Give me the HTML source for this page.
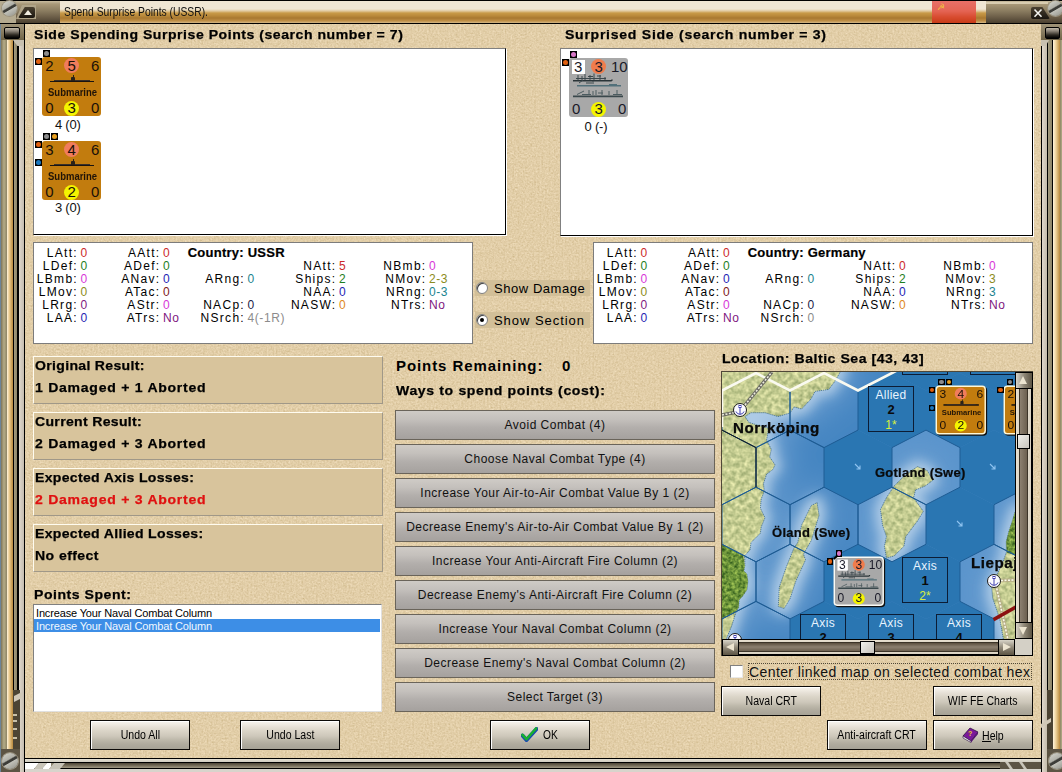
<!DOCTYPE html>
<html><head><meta charset="utf-8">
<style>
*{margin:0;padding:0;box-sizing:border-box}
html,body{width:1062px;height:772px;overflow:hidden;background:#e0cca6;font-family:"Liberation Sans", sans-serif;color:#000}
.a{position:absolute}
.t{position:absolute;white-space:nowrap;line-height:1}
.b13{font-weight:bold;font-size:13px;letter-spacing:0.5px;transform:scaleX(1.08);transform-origin:0 0;-webkit-text-stroke:0.25px #000}
.btn{position:absolute;border:1px solid #6a645a;background:linear-gradient(#cfcbc6 0%,#c4c0bc 30%,#b2aeab 60%,#a5a19e 100%);font-size:12px;letter-spacing:0.48px;text-align:center;color:#111}
.wb{position:absolute;border:1px solid #0c0a08;box-shadow:inset 1px 1px 0 #fff;background:linear-gradient(#f6f4f0 0px,#f0ebe3 3px,#e6e0d6 6px,#dad4c7 10px,#cec8bb 15px,#bdb8aa 19px,#b0ab9e 23px,#a6a296 28px);font-size:12px;text-align:center;color:#000;display:flex;align-items:center;justify-content:center}
.wb span{display:inline-block;transform:scaleX(0.88);white-space:nowrap}
</style></head><body>

<svg class="a" style="left:0;top:0" width="1062" height="772"><filter id="tx" x="0" y="0" width="100%" height="100%"><feTurbulence type="fractalNoise" baseFrequency="0.55" numOctaves="2" seed="3" result="n"/><feColorMatrix in="n" type="matrix" values="0.33 0.33 0.33 0 0  0.33 0.33 0.33 0 0  0.33 0.33 0.33 0 0  0 0 0 0 1" result="g"/><feComposite in="g" in2="SourceGraphic" operator="arithmetic" k1="0" k2="0.5" k3="1" k4="-0.25"/></filter><rect width="1062" height="772" fill="#e2cea8" filter="url(#tx)"/></svg>
<div class="a" style="left:0;top:0;width:1062px;height:24px;background:#000"></div>
<div class="a" style="left:60px;top:1px;width:926px;height:22px;background:linear-gradient(#efe6d4 0px,#efe6d4 8px,#e0c89c 10px,#c89a48 12px,#b8883a 15px,#a87830 17px,#c09048 20px,#d4b888 22px)"></div>
<div class="t" style="left:63.5px;top:6px;font-size:12px;color:#111;transform:scaleX(0.86);transform-origin:0 0">Spend Surprise Points (USSR).</div>
<div class="a" style="left:0;top:1px;width:60px;height:22px;background:linear-gradient(#c8bca0 0,#a89878 3px,#8a7c60 10px,#6c5e48 16px,#4a4030 22px)"></div>
<div class="a" style="left:0;top:1px;width:16px;height:22px;background:#b4aa90"></div>
<div class="a" style="left:2px;top:1px;width:15px;height:15px;border-radius:50%;background:linear-gradient(150deg,#d8d8d0 0%,#b0b0a8 40%,#3c3c38 46%,#3c3c38 54%,#c0c0b8 58%,#909088 100%);box-shadow:0 0 0 1px #9c9480"></div>
<div class="a" style="left:16px;top:5px;width:20px;height:14px;background:#b0a488;clip-path:polygon(30% 0,100% 0,100% 100%,0 100%)"></div>
<div class="a" style="left:18px;top:7px;width:17px;height:11px;background:linear-gradient(#4a4030,#1a1610);clip-path:polygon(40% 0,100% 0,100% 100%,0 100%);border-radius:2px"></div>
<div class="a" style="left:24px;top:10px;width:0;height:0;border-left:4px solid transparent;border-right:4px solid transparent;border-bottom:5px solid #f0ece0"></div>
<div class="a" style="left:932px;top:1px;width:44px;height:22px;background:linear-gradient(#e87068 0,#e46454 10px,#d84c30 16px,#c83c18 22px)"></div>
<div class="t" style="left:937px;top:3px;font-size:9px;color:#f0c040">&#9773;</div>
<div class="a" style="left:986px;top:1px;width:76px;height:22px;background:linear-gradient(#c8bca0 0,#a89878 3px,#8a7c60 10px,#6c5e48 16px,#4a4030 22px)"></div>
<div class="a" style="left:986px;top:2px;width:62px;height:2px;background:#d8ccb0"></div>
<div class="a" style="left:1031px;top:7px;width:19px;height:12px;background:linear-gradient(#4a4030,#1a1610);clip-path:polygon(0 0,60% 0,100% 100%,0 100%);border-radius:2px"></div>
<svg class="a" style="left:1033px;top:8px" width="10" height="10" viewBox="0 0 10 10"><path d="M1.5 1.5 L8.5 8.8 M8.5 1.5 L1.5 8.8" stroke="#f4f4f0" stroke-width="1.6"/></svg>
<div class="a" style="left:1048px;top:1px;width:15px;height:15px;border-radius:50%;background:linear-gradient(150deg,#d8d8d0 0%,#b0b0a8 40%,#3c3c38 46%,#3c3c38 54%,#c0c0b8 58%,#909088 100%);box-shadow:0 0 0 1px #9c9480"></div>
<div class="a" style="left:0;top:24px;width:25px;height:748px;background:linear-gradient(90deg,#6c8498 0,#6c8498 1px,#7c7458 1px,#b4ac88 4px,#8c8464 7px,#fff4dc 7px,#ecd098 9px,#b8883c 13px,#000 13px,#000 14px,#a49c80 14px,#8c8468 17px,#000 17px,#000 19px,#e0d8cc 19px,#c4bcb0 24px,#000 24px,#000 25px)"></div>
<div class="a" style="left:1px;top:24px;width:23px;height:16px;background:linear-gradient(#a09478,#706448)"></div>
<div class="a" style="left:4px;top:27px;width:16px;height:12px;background:linear-gradient(#c0b8a8 0,#8c8478 30%,#2c2820 70%,#000 100%);border-radius:2px;border:1px solid #000"></div>
<div class="a" style="left:13px;top:40px;width:11px;height:6px;background:#c8c0b0;clip-path:polygon(0 0,100% 0,100% 100%,40% 100%)"></div>
<div class="a" style="left:13px;top:690px;width:7px;height:68px;background:#4c4434"></div>
<div class="a" style="left:14px;top:692px;width:8px;height:10px;background:#d0c8b8;clip-path:polygon(0 40%,100% 0,100% 60%,0 100%)"></div>
<div class="a" style="left:13px;top:714px;width:4px;height:2px;background:#c8c0a8"></div>
<div class="a" style="left:13px;top:720px;width:4px;height:2px;background:#c8c0a8"></div>
<div class="a" style="left:13px;top:728px;width:4px;height:2px;background:#c8c0a8"></div>
<div class="a" style="left:13px;top:737px;width:4px;height:2px;background:#c8c0a8"></div>
<div class="a" style="left:1px;top:749px;width:19px;height:23px;background:#5c5444"></div>
<div class="a" style="left:2px;top:753px;width:16px;height:16px;border-radius:50%;background:linear-gradient(150deg,#d8d8d0 0%,#b0b0a8 40%,#3c3c38 46%,#3c3c38 54%,#c0c0b8 58%,#909088 100%);box-shadow:0 0 0 1px #9c9480"></div>
<div class="a" style="left:1041px;top:24px;width:21px;height:748px;background:linear-gradient(90deg,#000 0,#000 1px,#e0d8cc 1px,#c4bcac 6px,#000 6px,#000 7px,#a49c80 7px,#8c8468 11px,#000 11px,#000 12px,#fff4dc 12px,#ecd098 15px,#b8883c 19px,#8c8464 19px,#b4ac88 21px)"></div>
<div class="a" style="left:1041px;top:24px;width:21px;height:16px;background:linear-gradient(#a09478,#706448)"></div>
<div class="a" style="left:1045px;top:27px;width:15px;height:12px;background:linear-gradient(#c0b8a8 0,#8c8478 30%,#2c2820 70%,#000 100%);border-radius:2px;border:1px solid #000"></div>
<div class="a" style="left:1041px;top:40px;width:8px;height:6px;background:#c8c0b0;clip-path:polygon(0 0,100% 0,60% 100%,0 100%)"></div>
<div class="a" style="left:1047px;top:690px;width:6px;height:68px;background:#4c4434"></div>
<div class="a" style="left:1041px;top:718px;width:10px;height:10px;background:#d0c8b8;clip-path:polygon(0 60%,100% 0,100% 40%,0 100%)"></div>
<div class="a" style="left:1047px;top:749px;width:15px;height:23px;background:#5c5444"></div>
<div class="a" style="left:1049px;top:753px;width:16px;height:16px;border-radius:50%;background:linear-gradient(150deg,#d8d8d0 0%,#b0b0a8 40%,#3c3c38 46%,#3c3c38 54%,#c0c0b8 58%,#909088 100%);box-shadow:0 0 0 1px #9c9480"></div>
<div class="a" style="left:25px;top:758px;width:1016px;height:14px;background:linear-gradient(#000 0,#000 1px,#e4e0d4 1px,#d0ccc0 4px,#000 4px,#000 5px,#4c4436 5px,#7c7460 8px,#a49c88 10px,#000 10px,#000 11px,#d8d4cc 11px)"></div>
<svg class="a" style="left:25px;top:762px" width="60" height="8" viewBox="0 0 60 8"><polygon points="0,1 14,1 9,7 0,7" fill="#fff"/><polygon points="14,1 22,1 17,7 9,7" fill="#c8c4b8"/><polygon points="22,1 26,1 26,7 17,7" fill="#fff"/><polygon points="26,1 29,1 24,7 26,7" fill="#8c8470"/><polygon points="29,1 40,1 35,7 24,7" fill="#c8c4b8"/></svg>
<div class="a" style="left:1000px;top:762px;width:41px;height:7px;background:#5c5444"></div>
<div class="a" style="left:1005px;top:762px;width:8px;height:7px;background:#c8c4b8;clip-path:polygon(0 0,40% 0,100% 100%,60% 100%)"></div>
<div class="a" style="left:1019px;top:762px;width:8px;height:7px;background:#c8c4b8;clip-path:polygon(0 0,40% 0,100% 100%,60% 100%)"></div>
<div class="t b13" style="left:34px;top:28px">Side Spending Surprise Points (search number = 7)</div>
<div class="t b13" style="left:565px;top:28px;letter-spacing:0.68px">Surprised Side (search number = 3)</div>
<div class="a" style="left:33px;top:48px;width:473px;height:187px;background:#fff;border-top:1px solid #808080;border-left:1px solid #808080;border-right:1px solid #000;border-bottom:1px solid #000;box-shadow:1px 1px 0 #fff"></div>
<div class="a" style="left:560px;top:48px;width:473px;height:188px;background:#fff;border-top:1px solid #808080;border-left:1px solid #808080;border-right:1px solid #000;border-bottom:1px solid #000;box-shadow:1px 1px 0 #fff"></div>
<div class="a" style="left:42px;top:57px;width:59px;height:59px;transform:scale(1.0,1.0);transform-origin:0 0"><div class="a" style="left:0;top:0;width:59px;height:59px;background:#c27c0e;border-radius:3px;"></div><div class="a" style="left:22px;top:1px;width:15px;height:15px;border-radius:50%;background:#f07c5c"></div><div class="a" style="left:22px;top:43.5px;width:15px;height:15px;border-radius:50%;background:#f4f400"></div><div class="t" style="left:3.2px;top:1.3px;font-size:15px;color:#1a1008">2</div><div class="t" style="left:25.5px;top:1.0px;font-size:15px;color:#1a1008">5</div><div class="t" style="left:49px;top:1.3px;font-size:15px;color:#1a1008">6</div><div class="t" style="left:3.2px;top:42.5px;font-size:15px;color:#1a1008">0</div><div class="t" style="left:25.5px;top:42.5px;font-size:15px;color:#1a1008">3</div><div class="t" style="left:49px;top:42.5px;font-size:15px;color:#1a1008">0</div><div class="a" style="left:8px;top:23.5px;width:44px;height:1.5px;background:#1a1410"></div><div class="a" style="left:12px;top:22.8px;width:36px;height:1px;background:#3a3028"></div><div class="a" style="left:29px;top:19.5px;width:4px;height:4px;background:#2a2218;border-radius:1px 1px 0 0"></div><div class="a" style="left:30.5px;top:17.5px;width:1px;height:3px;background:#2a2218"></div><div class="t" style="left:5.5px;top:31px;font-size:10px;font-weight:bold;color:#201408;transform:scaleX(0.95);transform-origin:0 0">Submarine</div></div>
<div class="a" style="left:43px;top:50px;width:7px;height:7px;background:#000"><div class="a" style="left:1px;top:1px;width:5px;height:5px;border-radius:50%;background:#8c8c8c"></div></div>
<div class="a" style="left:35px;top:58px;width:7px;height:7px;background:#000"><div class="a" style="left:1px;top:1px;width:5px;height:5px;border-radius:50%;background:#e06010"></div></div>
<div class="t" style="left:55px;top:118.3px;font-size:13px;letter-spacing:-0.25px;color:#111">4 (0)</div>
<div class="a" style="left:42px;top:141px;width:59px;height:59px;transform:scale(1.0,1.0);transform-origin:0 0"><div class="a" style="left:0;top:0;width:59px;height:59px;background:#c27c0e;border-radius:3px;"></div><div class="a" style="left:22px;top:1px;width:15px;height:15px;border-radius:50%;background:#f07c5c"></div><div class="a" style="left:22px;top:43.5px;width:15px;height:15px;border-radius:50%;background:#f4f400"></div><div class="t" style="left:3.2px;top:1.3px;font-size:15px;color:#1a1008">3</div><div class="t" style="left:25.5px;top:1.0px;font-size:15px;color:#1a1008">4</div><div class="t" style="left:49px;top:1.3px;font-size:15px;color:#1a1008">6</div><div class="t" style="left:3.2px;top:42.5px;font-size:15px;color:#1a1008">0</div><div class="t" style="left:25.5px;top:42.5px;font-size:15px;color:#1a1008">2</div><div class="t" style="left:49px;top:42.5px;font-size:15px;color:#1a1008">0</div><div class="a" style="left:8px;top:23.5px;width:44px;height:1.5px;background:#1a1410"></div><div class="a" style="left:12px;top:22.8px;width:36px;height:1px;background:#3a3028"></div><div class="a" style="left:29px;top:19.5px;width:4px;height:4px;background:#2a2218;border-radius:1px 1px 0 0"></div><div class="a" style="left:30.5px;top:17.5px;width:1px;height:3px;background:#2a2218"></div><div class="t" style="left:5.5px;top:31px;font-size:10px;font-weight:bold;color:#201408;transform:scaleX(0.95);transform-origin:0 0">Submarine</div></div>
<div class="a" style="left:43px;top:133px;width:7px;height:7px;background:#000"><div class="a" style="left:1px;top:1px;width:5px;height:5px;border-radius:50%;background:#8c8c8c"></div></div>
<div class="a" style="left:51px;top:133px;width:7px;height:7px;background:#000"><div class="a" style="left:1px;top:1px;width:5px;height:5px;border-radius:50%;background:#e8a020"></div></div>
<div class="a" style="left:35px;top:141px;width:7px;height:7px;background:#000"><div class="a" style="left:1px;top:1px;width:5px;height:5px;border-radius:50%;background:#e06010"></div></div>
<div class="a" style="left:35px;top:159px;width:7px;height:7px;background:#000"><div class="a" style="left:1px;top:1px;width:5px;height:5px;border-radius:50%;background:#1a78c0"></div></div>
<div class="t" style="left:55px;top:201px;font-size:13px;letter-spacing:-0.25px;color:#111">3 (0)</div>
<div class="a" style="left:569px;top:58px;width:59px;height:59px;transform:scale(1.0,1.0);transform-origin:0 0"><div class="a" style="left:0;top:0;width:59px;height:59px;background:#a8a8a8;border-radius:3px;"></div><div class="a" style="left:3px;top:2px;width:13px;height:14px;background:#fff"></div><div class="a" style="left:22px;top:1px;width:15px;height:15px;border-radius:50%;background:#f07c4c"></div><div class="a" style="left:22px;top:43.5px;width:15px;height:15px;border-radius:50%;background:#f4f400"></div><div class="t" style="left:5px;top:1.3px;font-size:15px;color:#1a1a28">3</div><div class="t" style="left:25.5px;top:1.0px;font-size:15px;color:#1a1a28">3</div><div class="t" style="left:42px;top:1.3px;font-size:15px;color:#1a1a28">10</div><div class="t" style="left:3px;top:42.5px;font-size:15px;color:#1a1a28">0</div><div class="t" style="left:25.5px;top:42.5px;font-size:15px;color:#1a1a28">3</div><div class="t" style="left:49px;top:42.5px;font-size:15px;color:#1a1a28">0</div><svg class="a" style="left:0;top:0" width="59" height="59" viewBox="0 0 59 59">
<g fill="none" stroke-width="1">
<path d="M4 22.8 H42 Q43 22.8 43 21.5" stroke="#2a3438" stroke-width="1.6"/>
<path d="M7 20.5 h30 M9 17 v5 M13 18 v4 M16 16 v6 M19 18.5 h5 M21 17 v5 M25 15.5 v6.5 M28 18 h4 M31 17 v5 M36 19 v3" stroke="#3c484c"/>
<path d="M10 25 L14 22 M17 25 h6 M24 23 v3" stroke="#3c484c"/>
<path d="M8 27.8 H52" stroke="#52707a" stroke-width="1.5"/>
<path d="M40 26.5 h8" stroke="#52707a"/>
<path d="M4 38.3 H54" stroke="#3a484c" stroke-width="1.8"/>
<path d="M8 36.5 L15 33 M13 36.5 h9 M20 32 v5 M24 33 v4 M27 32 v5 M29 35 h5 M33 32 v5 M40 33 v4 M44 36.5 h9 M48 32 v5" stroke="#4c5c60"/>
</g></svg></div>
<div class="a" style="left:570px;top:51px;width:7px;height:7px;background:#000"><div class="a" style="left:1px;top:1px;width:5px;height:5px;border-radius:50%;background:#d878c8"></div></div>
<div class="a" style="left:562px;top:59px;width:7px;height:7px;background:#000"><div class="a" style="left:1px;top:1px;width:5px;height:5px;border-radius:50%;background:#e06010"></div></div>
<div class="t" style="left:584.5px;top:119.5px;font-size:13px;letter-spacing:-0.2px;color:#111">0 (-)</div>
<div class="a" style="left:33px;top:242px;width:440px;height:102px;background:#fff;border:1px solid #7c7c7c"></div>
<div class="a" style="left:593px;top:242px;width:440px;height:102px;background:#fff;border:1px solid #7c7c7c"></div>
<div class="t" style="left:-2.0px;width:80px;text-align:right;top:246.6px;font-size:12px;letter-spacing:1.3px">LAtt:</div>
<div class="t" style="left:80.5px;top:246.6px;font-size:12px;letter-spacing:0.6px;color:#cc2a2a">0</div>
<div class="t" style="left:-2.0px;width:80px;text-align:right;top:259.7px;font-size:12px;letter-spacing:1.3px">LDef:</div>
<div class="t" style="left:80.5px;top:259.7px;font-size:12px;letter-spacing:0.6px;color:#1e801e">0</div>
<div class="t" style="left:-2.0px;width:80px;text-align:right;top:272.8px;font-size:12px;letter-spacing:1.3px">LBmb:</div>
<div class="t" style="left:80.5px;top:272.8px;font-size:12px;letter-spacing:0.6px;color:#d838d8">0</div>
<div class="t" style="left:-2.0px;width:80px;text-align:right;top:285.9px;font-size:12px;letter-spacing:1.3px">LMov:</div>
<div class="t" style="left:80.5px;top:285.9px;font-size:12px;letter-spacing:0.6px;color:#8c8c20">0</div>
<div class="t" style="left:-2.0px;width:80px;text-align:right;top:299.0px;font-size:12px;letter-spacing:1.3px">LRrg:</div>
<div class="t" style="left:80.5px;top:299.0px;font-size:12px;letter-spacing:0.6px;color:#801880">0</div>
<div class="t" style="left:-2.0px;width:80px;text-align:right;top:312.1px;font-size:12px;letter-spacing:1.3px">LAA:</div>
<div class="t" style="left:80.5px;top:312.1px;font-size:12px;letter-spacing:0.6px;color:#2626b4">0</div>
<div class="t" style="left:80.5px;width:80px;text-align:right;top:246.6px;font-size:12px;letter-spacing:1.3px">AAtt:</div>
<div class="t" style="left:163.0px;top:246.6px;font-size:12px;letter-spacing:0.6px;color:#cc2a2a">0</div>
<div class="t" style="left:80.5px;width:80px;text-align:right;top:259.7px;font-size:12px;letter-spacing:1.3px">ADef:</div>
<div class="t" style="left:163.0px;top:259.7px;font-size:12px;letter-spacing:0.6px;color:#1e801e">0</div>
<div class="t" style="left:80.5px;width:80px;text-align:right;top:272.8px;font-size:12px;letter-spacing:1.3px">ANav:</div>
<div class="t" style="left:163.0px;top:272.8px;font-size:12px;letter-spacing:0.6px;color:#2626b4">0</div>
<div class="t" style="left:80.5px;width:80px;text-align:right;top:285.9px;font-size:12px;letter-spacing:1.3px">ATac:</div>
<div class="t" style="left:163.0px;top:285.9px;font-size:12px;letter-spacing:0.6px;color:#802020">0</div>
<div class="t" style="left:80.5px;width:80px;text-align:right;top:299.0px;font-size:12px;letter-spacing:1.3px">AStr:</div>
<div class="t" style="left:163.0px;top:299.0px;font-size:12px;letter-spacing:0.6px;color:#d838d8">0</div>
<div class="t" style="left:80.5px;width:80px;text-align:right;top:312.1px;font-size:12px;letter-spacing:1.3px">ATrs:</div>
<div class="t" style="left:163.0px;top:312.1px;font-size:12px;letter-spacing:0.6px;color:#801880">No</div>
<div class="t" style="left:165.0px;width:80px;text-align:right;top:272.8px;font-size:12px;letter-spacing:1.3px">ARng:</div>
<div class="t" style="left:247.5px;top:272.8px;font-size:12px;letter-spacing:0.6px;color:#1a8490">0</div>
<div class="t" style="left:165.0px;width:80px;text-align:right;top:299.0px;font-size:12px;letter-spacing:1.3px">NACp:</div>
<div class="t" style="left:247.5px;top:299.0px;font-size:12px;letter-spacing:0.6px;color:#1c1c48">0</div>
<div class="t" style="left:165.0px;width:80px;text-align:right;top:312.1px;font-size:12px;letter-spacing:1.3px">NSrch:</div>
<div class="t" style="left:247.5px;top:312.1px;font-size:12px;letter-spacing:0.6px;color:#8c8c8c">4(-1R)</div>
<div class="t" style="left:256.5px;width:80px;text-align:right;top:259.7px;font-size:12px;letter-spacing:1.3px">NAtt:</div>
<div class="t" style="left:339.0px;top:259.7px;font-size:12px;letter-spacing:0.6px;color:#cc2a2a">5</div>
<div class="t" style="left:256.5px;width:80px;text-align:right;top:272.8px;font-size:12px;letter-spacing:1.3px">Ships:</div>
<div class="t" style="left:339.0px;top:272.8px;font-size:12px;letter-spacing:0.6px;color:#1e801e">2</div>
<div class="t" style="left:256.5px;width:80px;text-align:right;top:285.9px;font-size:12px;letter-spacing:1.3px">NAA:</div>
<div class="t" style="left:339.0px;top:285.9px;font-size:12px;letter-spacing:0.6px;color:#2626b4">0</div>
<div class="t" style="left:256.5px;width:80px;text-align:right;top:299.0px;font-size:12px;letter-spacing:1.3px">NASW:</div>
<div class="t" style="left:339.0px;top:299.0px;font-size:12px;letter-spacing:0.6px;color:#e08820">0</div>
<div class="t" style="left:346.5px;width:80px;text-align:right;top:259.7px;font-size:12px;letter-spacing:1.3px">NBmb:</div>
<div class="t" style="left:429.0px;top:259.7px;font-size:12px;letter-spacing:0.6px;color:#d838d8">0</div>
<div class="t" style="left:346.5px;width:80px;text-align:right;top:272.8px;font-size:12px;letter-spacing:1.3px">NMov:</div>
<div class="t" style="left:429.0px;top:272.8px;font-size:12px;letter-spacing:0.6px;color:#8c8c20">2-3</div>
<div class="t" style="left:346.5px;width:80px;text-align:right;top:285.9px;font-size:12px;letter-spacing:1.3px">NRng:</div>
<div class="t" style="left:429.0px;top:285.9px;font-size:12px;letter-spacing:0.6px;color:#1a8490">0-3</div>
<div class="t" style="left:346.5px;width:80px;text-align:right;top:299.0px;font-size:12px;letter-spacing:1.3px">NTrs:</div>
<div class="t" style="left:429.0px;top:299.0px;font-size:12px;letter-spacing:0.6px;color:#801880">No</div>
<div class="t" style="left:187.7px;top:245.8px;font-size:13px;font-weight:bold;letter-spacing:0.25px;-webkit-text-stroke:0.2px #000">Country: USSR</div>
<div class="t" style="left:558.0px;width:80px;text-align:right;top:246.6px;font-size:12px;letter-spacing:1.3px">LAtt:</div>
<div class="t" style="left:640.5px;top:246.6px;font-size:12px;letter-spacing:0.6px;color:#cc2a2a">0</div>
<div class="t" style="left:558.0px;width:80px;text-align:right;top:259.7px;font-size:12px;letter-spacing:1.3px">LDef:</div>
<div class="t" style="left:640.5px;top:259.7px;font-size:12px;letter-spacing:0.6px;color:#1e801e">0</div>
<div class="t" style="left:558.0px;width:80px;text-align:right;top:272.8px;font-size:12px;letter-spacing:1.3px">LBmb:</div>
<div class="t" style="left:640.5px;top:272.8px;font-size:12px;letter-spacing:0.6px;color:#d838d8">0</div>
<div class="t" style="left:558.0px;width:80px;text-align:right;top:285.9px;font-size:12px;letter-spacing:1.3px">LMov:</div>
<div class="t" style="left:640.5px;top:285.9px;font-size:12px;letter-spacing:0.6px;color:#8c8c20">0</div>
<div class="t" style="left:558.0px;width:80px;text-align:right;top:299.0px;font-size:12px;letter-spacing:1.3px">LRrg:</div>
<div class="t" style="left:640.5px;top:299.0px;font-size:12px;letter-spacing:0.6px;color:#801880">0</div>
<div class="t" style="left:558.0px;width:80px;text-align:right;top:312.1px;font-size:12px;letter-spacing:1.3px">LAA:</div>
<div class="t" style="left:640.5px;top:312.1px;font-size:12px;letter-spacing:0.6px;color:#2626b4">0</div>
<div class="t" style="left:640.5px;width:80px;text-align:right;top:246.6px;font-size:12px;letter-spacing:1.3px">AAtt:</div>
<div class="t" style="left:723.0px;top:246.6px;font-size:12px;letter-spacing:0.6px;color:#cc2a2a">0</div>
<div class="t" style="left:640.5px;width:80px;text-align:right;top:259.7px;font-size:12px;letter-spacing:1.3px">ADef:</div>
<div class="t" style="left:723.0px;top:259.7px;font-size:12px;letter-spacing:0.6px;color:#1e801e">0</div>
<div class="t" style="left:640.5px;width:80px;text-align:right;top:272.8px;font-size:12px;letter-spacing:1.3px">ANav:</div>
<div class="t" style="left:723.0px;top:272.8px;font-size:12px;letter-spacing:0.6px;color:#2626b4">0</div>
<div class="t" style="left:640.5px;width:80px;text-align:right;top:285.9px;font-size:12px;letter-spacing:1.3px">ATac:</div>
<div class="t" style="left:723.0px;top:285.9px;font-size:12px;letter-spacing:0.6px;color:#802020">0</div>
<div class="t" style="left:640.5px;width:80px;text-align:right;top:299.0px;font-size:12px;letter-spacing:1.3px">AStr:</div>
<div class="t" style="left:723.0px;top:299.0px;font-size:12px;letter-spacing:0.6px;color:#d838d8">0</div>
<div class="t" style="left:640.5px;width:80px;text-align:right;top:312.1px;font-size:12px;letter-spacing:1.3px">ATrs:</div>
<div class="t" style="left:723.0px;top:312.1px;font-size:12px;letter-spacing:0.6px;color:#801880">No</div>
<div class="t" style="left:725.0px;width:80px;text-align:right;top:272.8px;font-size:12px;letter-spacing:1.3px">ARng:</div>
<div class="t" style="left:807.5px;top:272.8px;font-size:12px;letter-spacing:0.6px;color:#1a8490">0</div>
<div class="t" style="left:725.0px;width:80px;text-align:right;top:299.0px;font-size:12px;letter-spacing:1.3px">NACp:</div>
<div class="t" style="left:807.5px;top:299.0px;font-size:12px;letter-spacing:0.6px;color:#1c1c48">0</div>
<div class="t" style="left:725.0px;width:80px;text-align:right;top:312.1px;font-size:12px;letter-spacing:1.3px">NSrch:</div>
<div class="t" style="left:807.5px;top:312.1px;font-size:12px;letter-spacing:0.6px;color:#8c8c8c">0</div>
<div class="t" style="left:816.5px;width:80px;text-align:right;top:259.7px;font-size:12px;letter-spacing:1.3px">NAtt:</div>
<div class="t" style="left:899.0px;top:259.7px;font-size:12px;letter-spacing:0.6px;color:#cc2a2a">0</div>
<div class="t" style="left:816.5px;width:80px;text-align:right;top:272.8px;font-size:12px;letter-spacing:1.3px">Ships:</div>
<div class="t" style="left:899.0px;top:272.8px;font-size:12px;letter-spacing:0.6px;color:#1e801e">2</div>
<div class="t" style="left:816.5px;width:80px;text-align:right;top:285.9px;font-size:12px;letter-spacing:1.3px">NAA:</div>
<div class="t" style="left:899.0px;top:285.9px;font-size:12px;letter-spacing:0.6px;color:#2626b4">0</div>
<div class="t" style="left:816.5px;width:80px;text-align:right;top:299.0px;font-size:12px;letter-spacing:1.3px">NASW:</div>
<div class="t" style="left:899.0px;top:299.0px;font-size:12px;letter-spacing:0.6px;color:#e08820">0</div>
<div class="t" style="left:906.5px;width:80px;text-align:right;top:259.7px;font-size:12px;letter-spacing:1.3px">NBmb:</div>
<div class="t" style="left:989.0px;top:259.7px;font-size:12px;letter-spacing:0.6px;color:#d838d8">0</div>
<div class="t" style="left:906.5px;width:80px;text-align:right;top:272.8px;font-size:12px;letter-spacing:1.3px">NMov:</div>
<div class="t" style="left:989.0px;top:272.8px;font-size:12px;letter-spacing:0.6px;color:#8c8c20">3</div>
<div class="t" style="left:906.5px;width:80px;text-align:right;top:285.9px;font-size:12px;letter-spacing:1.3px">NRng:</div>
<div class="t" style="left:989.0px;top:285.9px;font-size:12px;letter-spacing:0.6px;color:#1a8490">3</div>
<div class="t" style="left:906.5px;width:80px;text-align:right;top:299.0px;font-size:12px;letter-spacing:1.3px">NTrs:</div>
<div class="t" style="left:989.0px;top:299.0px;font-size:12px;letter-spacing:0.6px;color:#801880">No</div>
<div class="t" style="left:747.7px;top:245.8px;font-size:13px;font-weight:bold;letter-spacing:0.25px;-webkit-text-stroke:0.2px #000">Country: Germany</div>
<div class="a" style="left:475px;top:280px;width:115px;height:16px;background:#d2bf98"></div>
<div class="a" style="left:475px;top:312px;width:115px;height:16px;background:#d2bf98"></div>
<div class="a" style="left:476px;top:282px;width:12px;height:12px;border-radius:50%;background:#fff;border:1px solid #808080;box-shadow:inset 1px 1px 0 #404040"></div>
<div class="a" style="left:476px;top:314px;width:12px;height:12px;border-radius:50%;background:#fff;border:1px solid #808080;box-shadow:inset 1px 1px 0 #404040"></div>
<div class="a" style="left:480px;top:318px;width:4px;height:4px;border-radius:50%;background:#000"></div>
<div class="t" style="left:494px;top:282px;font-size:13px;letter-spacing:0.55px">Show Damage</div>
<div class="t" style="left:494px;top:313.5px;font-size:13px;letter-spacing:0.95px">Show Section</div>
<div class="a" style="left:33px;top:356px;width:350px;height:48px;background:#d8c49c;border-top:1px solid #fffcf0;border-left:1px solid #fffcf0;border-right:1px solid #a09888;border-bottom:1px solid #a09888"></div>
<div class="t b13" style="left:35px;top:358.5px;letter-spacing:0.3px">Original Result:</div>
<div class="t b13" style="left:35px;top:381px;color:#000;-webkit-text-stroke-color:#000;letter-spacing:0.68px">1 Damaged + 1 Aborted</div>
<div class="a" style="left:33px;top:412px;width:350px;height:48px;background:#d8c49c;border-top:1px solid #fffcf0;border-left:1px solid #fffcf0;border-right:1px solid #a09888;border-bottom:1px solid #a09888"></div>
<div class="t b13" style="left:35px;top:414.5px;letter-spacing:0.3px">Current Result:</div>
<div class="t b13" style="left:35px;top:437px;color:#000;-webkit-text-stroke-color:#000;letter-spacing:0.68px">2 Damaged + 3 Aborted</div>
<div class="a" style="left:33px;top:468px;width:350px;height:48px;background:#d8c49c;border-top:1px solid #fffcf0;border-left:1px solid #fffcf0;border-right:1px solid #a09888;border-bottom:1px solid #a09888"></div>
<div class="t b13" style="left:35px;top:470.5px;letter-spacing:0.3px">Expected Axis Losses:</div>
<div class="t b13" style="left:35px;top:493px;color:#e01010;-webkit-text-stroke-color:#e01010;letter-spacing:0.68px">2 Damaged + 3 Aborted</div>
<div class="a" style="left:33px;top:524px;width:350px;height:48px;background:#d8c49c;border-top:1px solid #fffcf0;border-left:1px solid #fffcf0;border-right:1px solid #a09888;border-bottom:1px solid #a09888"></div>
<div class="t b13" style="left:35px;top:526.5px;letter-spacing:0.3px">Expected Allied Losses:</div>
<div class="t b13" style="left:35px;top:549px;color:#000;-webkit-text-stroke-color:#000;letter-spacing:0.4px">No effect</div>
<div class="t b13" style="left:34px;top:588px">Points Spent:</div>
<div class="a" style="left:33px;top:604px;width:349px;height:108px;background:#fff;border-top:1px solid #808080;border-left:1px solid #808080;border-right:1px solid #e0e0e0;border-bottom:1px solid #e0e0e0"></div>
<div class="t" style="left:36px;top:608px;font-size:11px;letter-spacing:-0.15px">Increase Your Naval Combat Column</div>
<div class="a" style="left:34px;top:619px;width:346px;height:13px;background:#3d8ee6"></div>
<div class="t" style="left:36px;top:621px;font-size:11px;letter-spacing:-0.15px;color:#f0f8ff">Increase Your Naval Combat Column</div>
<div class="t" style="left:396px;top:358px;font-size:15px;font-weight:bold;letter-spacing:0.92px">Points Remaining:</div>
<div class="t" style="left:562px;top:358px;font-size:15px;font-weight:bold">0</div>
<div class="t b13" style="left:396px;top:384px;letter-spacing:0.6px">Ways to spend points (cost):</div>
<div class="btn" style="left:395px;top:410px;width:320px;height:30px;line-height:28px">Avoid Combat (4)</div>
<div class="btn" style="left:395px;top:444px;width:320px;height:30px;line-height:28px">Choose Naval Combat Type (4)</div>
<div class="btn" style="left:395px;top:478px;width:320px;height:30px;line-height:28px">Increase Your Air-to-Air Combat Value By 1 (2)</div>
<div class="btn" style="left:395px;top:512px;width:320px;height:30px;line-height:28px">Decrease Enemy's Air-to-Air Combat Value By 1 (2)</div>
<div class="btn" style="left:395px;top:546px;width:320px;height:30px;line-height:28px">Increase Your Anti-Aircraft Fire Column (2)</div>
<div class="btn" style="left:395px;top:580px;width:320px;height:30px;line-height:28px">Decrease Enemy's Anti-Aircraft Fire Column (2)</div>
<div class="btn" style="left:395px;top:614px;width:320px;height:30px;line-height:28px">Increase Your Naval Combat Column (2)</div>
<div class="btn" style="left:395px;top:648px;width:320px;height:30px;line-height:28px">Decrease Enemy's Naval Combat Column (2)</div>
<div class="btn" style="left:395px;top:682px;width:320px;height:30px;line-height:28px">Select Target (3)</div>
<div class="t b13" style="left:722px;top:352px;letter-spacing:0.5px">Location: Baltic Sea [43, 43]</div>
<div class="a" style="left:721px;top:371px;width:312px;height:285px;background:#2f6fae;border:1px solid #504838"></div>
<svg class="a" style="left:722px;top:372px" width="293" height="267" viewBox="0 0 293 267">
<defs>
<filter id="blur" x="-50%" y="-50%" width="200%" height="200%"><feGaussianBlur stdDeviation="6"/></filter>
<filter id="blur2" x="-50%" y="-50%" width="200%" height="200%"><feGaussianBlur stdDeviation="14"/></filter>
<pattern id="landp" width="16" height="16" patternUnits="userSpaceOnUse"><rect width="16" height="16" fill="#c8c682"/><rect x="0" y="0" width="5" height="7" fill="#b6ae68"/><rect x="9" y="5" width="6" height="5" fill="#d6d698"/><rect x="3" y="10" width="6" height="6" fill="#bcb874"/><rect x="11" y="12" width="5" height="4" fill="#aaa462"/><rect x="6" y="2" width="3" height="3" fill="#d0d290"/></pattern>
<pattern id="forp" width="10" height="10" patternUnits="userSpaceOnUse"><rect width="10" height="10" fill="#6c9a42"/><rect x="0" y="0" width="4" height="5" fill="#4a7a2c"/><rect x="5" y="5" width="4" height="4" fill="#8cae5a"/><rect x="6" y="0" width="3" height="3" fill="#5a8836"/></pattern>
<filter id="ltex" x="0" y="0" width="100%" height="100%" color-interpolation-filters="sRGB"><feTurbulence type="fractalNoise" baseFrequency="0.22" numOctaves="2" seed="7" result="n"/><feColorMatrix in="n" type="matrix" values="0.5 0 0 0 0.52  0.42 0 0 0 0.59  0.4 0 0 0 0.37  0 0 0 0 1" result="c"/><feComposite in="c" in2="SourceGraphic" operator="in"/></filter>
<filter id="ftex" x="0" y="0" width="100%" height="100%" color-interpolation-filters="sRGB"><feTurbulence type="fractalNoise" baseFrequency="0.3" numOctaves="2" seed="11" result="n"/><feColorMatrix in="n" type="matrix" values="0.7 0 0 0 0.07  0.65 0 0 0 0.25  0.35 0 0 0 0.05  0 0 0 0 1" result="c"/><feComposite in="c" in2="SourceGraphic" operator="in"/></filter>
</defs>
<rect width="293" height="267" fill="#4686c2"/>
<polygon points="204.0,58.1 238.0,75.6 238.0,115.2 204.0,132.7 170.0,115.2 170.0,75.6" fill="#5a94cc"/>
<polygon points="170.0,115.2 204.0,132.7 204.0,172.3 170.0,189.8 136.0,172.3 136.0,132.7" fill="#5a94cc"/>
<polygon points="272.0,172.3 306.0,189.8 306.0,229.4 272.0,246.9 238.0,229.4 238.0,189.8" fill="#5a94cc"/>
<polygon points="306.0,115.2 340.0,132.7 340.0,172.3 306.0,189.8 272.0,172.3 272.0,132.7" fill="#5a94cc"/>
<g filter="url(#blur2)" fill="#6a9ed0" stroke="#6a9ed0" stroke-width="30" stroke-linejoin="round">
<polygon points="-3.0,-3.0 120.0,-3.0 112.6,9.7 106.8,17.4 93.0,19.4 89.0,27.0 79.6,37.0 72.0,35.0 68.0,41.0 56.0,44.6 43.0,40.7 29.0,40.7 23.0,44.6 27.0,50.5 46.6,56.3 44.6,68.0 49.3,77.3 47.7,85.0 53.1,92.9 50.8,97.5 44.6,102.2 41.5,111.5 42.3,119.3 39.2,127.0 38.4,136.3 43.0,145.7 39.2,155.0 38.4,161.2 29.0,170.5 28.0,178.0 22.8,183.6 22.8,194.0 21.8,199.0 24.9,202.0 25.9,209.5 24.9,217.8 20.7,224.0 17.1,228.0 16.6,235.4 13.5,241.7 9.7,254.0 3.8,268.0 2.0,271.0 -3.0,271.0"/>
<polygon points="95.1,130.6 97.1,143.3 89.3,168.5 81.5,182.1 83.5,188.0 73.8,209.3 68.0,226.8 62.1,236.5 56.3,234.6 57.3,215.1 64.0,195.7 71.8,176.3 75.7,170.5 79.6,153.0 85.4,141.3 89.3,133.5"/>
<polygon points="195.5,94.6 205.2,98.5 211.0,108.2 203.2,114.0 193.5,118.0 191.6,125.7 201.3,139.3 195.5,149.0 189.6,156.8 183.8,164.6 181.9,174.3 172.1,184.0 164.4,186.0 162.4,174.3 164.4,164.6 160.5,153.0 158.5,137.4 164.4,125.7 172.1,114.0 181.9,104.3 189.6,98.5"/>
<polygon points="296.0,137.0 293.0,140.0 290.0,150.0 287.0,158.8 284.2,169.7 284.5,180.0 279.7,193.3 274.3,204.0 269.7,215.0 270.6,225.9 274.3,236.8 277.9,247.6 281.5,268.0 282.0,271.0 296.0,271.0"/>
</g>
<g filter="url(#blur)" fill="#aecbe6" stroke="#aecbe6" stroke-width="12" stroke-linejoin="round">
<polygon points="-3.0,-3.0 120.0,-3.0 112.6,9.7 106.8,17.4 93.0,19.4 89.0,27.0 79.6,37.0 72.0,35.0 68.0,41.0 56.0,44.6 43.0,40.7 29.0,40.7 23.0,44.6 27.0,50.5 46.6,56.3 44.6,68.0 49.3,77.3 47.7,85.0 53.1,92.9 50.8,97.5 44.6,102.2 41.5,111.5 42.3,119.3 39.2,127.0 38.4,136.3 43.0,145.7 39.2,155.0 38.4,161.2 29.0,170.5 28.0,178.0 22.8,183.6 22.8,194.0 21.8,199.0 24.9,202.0 25.9,209.5 24.9,217.8 20.7,224.0 17.1,228.0 16.6,235.4 13.5,241.7 9.7,254.0 3.8,268.0 2.0,271.0 -3.0,271.0"/>
<polygon points="95.1,130.6 97.1,143.3 89.3,168.5 81.5,182.1 83.5,188.0 73.8,209.3 68.0,226.8 62.1,236.5 56.3,234.6 57.3,215.1 64.0,195.7 71.8,176.3 75.7,170.5 79.6,153.0 85.4,141.3 89.3,133.5"/>
<polygon points="195.5,94.6 205.2,98.5 211.0,108.2 203.2,114.0 193.5,118.0 191.6,125.7 201.3,139.3 195.5,149.0 189.6,156.8 183.8,164.6 181.9,174.3 172.1,184.0 164.4,186.0 162.4,174.3 164.4,164.6 160.5,153.0 158.5,137.4 164.4,125.7 172.1,114.0 181.9,104.3 189.6,98.5"/>
<polygon points="296.0,137.0 293.0,140.0 290.0,150.0 287.0,158.8 284.2,169.7 284.5,180.0 279.7,193.3 274.3,204.0 269.7,215.0 270.6,225.9 274.3,236.8 277.9,247.6 281.5,268.0 282.0,271.0 296.0,271.0"/>
</g>
<polygon points="204.0,-56.1 238.0,-38.6 238.0,1.0 204.0,18.5 170.0,1.0 170.0,-38.6" fill="#2a76b2"/>
<polygon points="272.0,-56.1 306.0,-38.6 306.0,1.0 272.0,18.5 238.0,1.0 238.0,-38.6" fill="#2a76b2"/>
<polygon points="170.0,1.0 204.0,18.5 204.0,58.1 170.0,75.6 136.0,58.1 136.0,18.5" fill="#2a76b2"/>
<polygon points="238.0,1.0 272.0,18.5 272.0,58.1 238.0,75.6 204.0,58.1 204.0,18.5" fill="#2a76b2"/>
<polygon points="306.0,1.0 340.0,18.5 340.0,58.1 306.0,75.6 272.0,58.1 272.0,18.5" fill="#2a76b2"/>
<polygon points="136.0,58.1 170.0,75.6 170.0,115.2 136.0,132.7 102.0,115.2 102.0,75.6" fill="#2a76b2"/>
<polygon points="272.0,58.1 306.0,75.6 306.0,115.2 272.0,132.7 238.0,115.2 238.0,75.6" fill="#2a76b2"/>
<polygon points="238.0,115.2 272.0,132.7 272.0,172.3 238.0,189.8 204.0,172.3 204.0,132.7" fill="#2a76b2"/>
<polygon points="136.0,172.3 170.0,189.8 170.0,229.4 136.0,246.9 102.0,229.4 102.0,189.8" fill="#2a76b2"/>
<polygon points="204.0,172.3 238.0,189.8 238.0,229.4 204.0,246.9 170.0,229.4 170.0,189.8" fill="#2a76b2"/>
<polygon points="102.0,229.4 136.0,246.9 136.0,286.5 102.0,304.0 68.0,286.5 68.0,246.9" fill="#2a76b2"/>
<polygon points="170.0,229.4 204.0,246.9 204.0,286.5 170.0,304.0 136.0,286.5 136.0,246.9" fill="#2a76b2"/>
<polygon points="238.0,229.4 272.0,246.9 272.0,286.5 238.0,304.0 204.0,286.5 204.0,246.9" fill="#2a76b2"/>
<polygon points="340.0,58.1 374.0,75.6 374.0,115.2 340.0,132.7 306.0,115.2 306.0,75.6" fill="#2a76b2"/>
<polygon points="340.0,172.3 374.0,189.8 374.0,229.4 340.0,246.9 306.0,229.4 306.0,189.8" fill="#2a76b2"/>
<g filter="url(#ltex)">
<polygon points="-3.0,-3.0 120.0,-3.0 112.6,9.7 106.8,17.4 93.0,19.4 89.0,27.0 79.6,37.0 72.0,35.0 68.0,41.0 56.0,44.6 43.0,40.7 29.0,40.7 23.0,44.6 27.0,50.5 46.6,56.3 44.6,68.0 49.3,77.3 47.7,85.0 53.1,92.9 50.8,97.5 44.6,102.2 41.5,111.5 42.3,119.3 39.2,127.0 38.4,136.3 43.0,145.7 39.2,155.0 38.4,161.2 29.0,170.5 28.0,178.0 22.8,183.6 22.8,194.0 21.8,199.0 24.9,202.0 25.9,209.5 24.9,217.8 20.7,224.0 17.1,228.0 16.6,235.4 13.5,241.7 9.7,254.0 3.8,268.0 2.0,271.0 -3.0,271.0" fill="#000"/>
<polygon points="95.1,130.6 97.1,143.3 89.3,168.5 81.5,182.1 83.5,188.0 73.8,209.3 68.0,226.8 62.1,236.5 56.3,234.6 57.3,215.1 64.0,195.7 71.8,176.3 75.7,170.5 79.6,153.0 85.4,141.3 89.3,133.5" fill="#000"/>
<polygon points="195.5,94.6 205.2,98.5 211.0,108.2 203.2,114.0 193.5,118.0 191.6,125.7 201.3,139.3 195.5,149.0 189.6,156.8 183.8,164.6 181.9,174.3 172.1,184.0 164.4,186.0 162.4,174.3 164.4,164.6 160.5,153.0 158.5,137.4 164.4,125.7 172.1,114.0 181.9,104.3 189.6,98.5" fill="#000"/>
<polygon points="296.0,137.0 293.0,140.0 290.0,150.0 287.0,158.8 284.2,169.7 284.5,180.0 279.7,193.3 274.3,204.0 269.7,215.0 270.6,225.9 274.3,236.8 277.9,247.6 281.5,268.0 282.0,271.0 296.0,271.0" fill="#000"/>
</g>
<polygon points="-3.0,-3.0 120.0,-3.0 112.6,9.7 106.8,17.4 93.0,19.4 89.0,27.0 79.6,37.0 72.0,35.0 68.0,41.0 56.0,44.6 43.0,40.7 29.0,40.7 23.0,44.6 27.0,50.5 46.6,56.3 44.6,68.0 49.3,77.3 47.7,85.0 53.1,92.9 50.8,97.5 44.6,102.2 41.5,111.5 42.3,119.3 39.2,127.0 38.4,136.3 43.0,145.7 39.2,155.0 38.4,161.2 29.0,170.5 28.0,178.0 22.8,183.6 22.8,194.0 21.8,199.0 24.9,202.0 25.9,209.5 24.9,217.8 20.7,224.0 17.1,228.0 16.6,235.4 13.5,241.7 9.7,254.0 3.8,268.0 2.0,271.0 -3.0,271.0" fill="none" stroke="#3a6890" stroke-width="0.8" stroke-dasharray="1.2,0.8"/>
<polygon points="95.1,130.6 97.1,143.3 89.3,168.5 81.5,182.1 83.5,188.0 73.8,209.3 68.0,226.8 62.1,236.5 56.3,234.6 57.3,215.1 64.0,195.7 71.8,176.3 75.7,170.5 79.6,153.0 85.4,141.3 89.3,133.5" fill="none" stroke="#3a6890" stroke-width="0.8" stroke-dasharray="1.2,0.8"/>
<polygon points="195.5,94.6 205.2,98.5 211.0,108.2 203.2,114.0 193.5,118.0 191.6,125.7 201.3,139.3 195.5,149.0 189.6,156.8 183.8,164.6 181.9,174.3 172.1,184.0 164.4,186.0 162.4,174.3 164.4,164.6 160.5,153.0 158.5,137.4 164.4,125.7 172.1,114.0 181.9,104.3 189.6,98.5" fill="none" stroke="#3a6890" stroke-width="0.8" stroke-dasharray="1.2,0.8"/>
<polygon points="296.0,137.0 293.0,140.0 290.0,150.0 287.0,158.8 284.2,169.7 284.5,180.0 279.7,193.3 274.3,204.0 269.7,215.0 270.6,225.9 274.3,236.8 277.9,247.6 281.5,268.0 282.0,271.0 296.0,271.0" fill="none" stroke="#3a6890" stroke-width="0.8" stroke-dasharray="1.2,0.8"/>
<g filter="url(#ftex)">
<polygon points="-3.0,170.8 0.0,172.3 21.0,183.2 22.8,194.0 21.8,199.0 24.9,202.0 25.9,209.5 24.9,217.8 20.7,224.0 17.1,228.0 16.6,235.4 13.5,240.0 0.0,246.9 -3.0,248.4" fill="#000"/>
<polygon points="296.0,137.0 293.0,140.0 290.0,150.0 287.0,158.8 284.2,169.7 285.0,181.0 296.0,183.0" fill="#000"/>
</g>
<g fill="none" stroke="#1e5c94" stroke-width="1">
<polygon points="0.0,-56.1 34.0,-38.6 34.0,1.0 0.0,18.5 -34.0,1.0 -34.0,-38.6"/>
<polygon points="68.0,-56.1 102.0,-38.6 102.0,1.0 68.0,18.5 34.0,1.0 34.0,-38.6"/>
<polygon points="136.0,-56.1 170.0,-38.6 170.0,1.0 136.0,18.5 102.0,1.0 102.0,-38.6"/>
<polygon points="340.0,-56.1 374.0,-38.6 374.0,1.0 340.0,18.5 306.0,1.0 306.0,-38.6"/>
<polygon points="34.0,1.0 68.0,18.5 68.0,58.1 34.0,75.6 0.0,58.1 0.0,18.5"/>
<polygon points="102.0,1.0 136.0,18.5 136.0,58.1 102.0,75.6 68.0,58.1 68.0,18.5"/>
<polygon points="0.0,58.1 34.0,75.6 34.0,115.2 0.0,132.7 -34.0,115.2 -34.0,75.6"/>
<polygon points="68.0,58.1 102.0,75.6 102.0,115.2 68.0,132.7 34.0,115.2 34.0,75.6"/>
<polygon points="204.0,58.1 238.0,75.6 238.0,115.2 204.0,132.7 170.0,115.2 170.0,75.6"/>
<polygon points="34.0,115.2 68.0,132.7 68.0,172.3 34.0,189.8 0.0,172.3 0.0,132.7"/>
<polygon points="102.0,115.2 136.0,132.7 136.0,172.3 102.0,189.8 68.0,172.3 68.0,132.7"/>
<polygon points="170.0,115.2 204.0,132.7 204.0,172.3 170.0,189.8 136.0,172.3 136.0,132.7"/>
<polygon points="306.0,115.2 340.0,132.7 340.0,172.3 306.0,189.8 272.0,172.3 272.0,132.7"/>
<polygon points="0.0,172.3 34.0,189.8 34.0,229.4 0.0,246.9 -34.0,229.4 -34.0,189.8"/>
<polygon points="68.0,172.3 102.0,189.8 102.0,229.4 68.0,246.9 34.0,229.4 34.0,189.8"/>
<polygon points="272.0,172.3 306.0,189.8 306.0,229.4 272.0,246.9 238.0,229.4 238.0,189.8"/>
<polygon points="34.0,229.4 68.0,246.9 68.0,286.5 34.0,304.0 0.0,286.5 0.0,246.9"/>
<polygon points="306.0,229.4 340.0,246.9 340.0,286.5 306.0,304.0 272.0,286.5 272.0,246.9"/>
</g>
<path d="M0 58.1 L34 75.6 L34 115.2" stroke="#1a1a14" stroke-width="1" fill="none"/>
<path d="M0 55 L0 18.5 L34 1 L68 18.5 L102 1 L136 18.5 L170 1 L180 -4" stroke="#fafaf0" stroke-width="2.6" fill="none"/>
<path d="M23 33 L50 0" stroke="#6c6c64" stroke-width="3.5" fill="none"/><path d="M23 33 L50 0" stroke="#f0f0e0" stroke-width="1.5" stroke-dasharray="2,1.5" fill="none"/>
<path d="M0 43 L15 40" stroke="#6c6c64" stroke-width="3.5" fill="none"/><path d="M0 43 L15 40" stroke="#f0f0e0" stroke-width="1.5" stroke-dasharray="2,1.5" fill="none"/>
<path d="M274 213 L286 268 M279 208.5 L293 208" stroke="#b8b088" stroke-width="3.5" fill="none"/><path d="M274 213 L286 268 M279 208.5 L293 208" stroke="#f8f8e8" stroke-width="1.6" stroke-dasharray="2,1.5" fill="none"/>
<path d="M271.5 247.6 L294 235" stroke="#8c1010" stroke-width="3.5" fill="none"/>
<path d="M133 92 L138 97 M138 93.5 L138 97 L134.5 97" stroke="#90c4f0" stroke-width="1.1" fill="none"/>
<path d="M268 92 L273 97 M273 93.5 L273 97 L269.5 97" stroke="#90c4f0" stroke-width="1.1" fill="none"/>
<path d="M235 149 L240 154 M240 150.5 L240 154 L236.5 154" stroke="#90c4f0" stroke-width="1.1" fill="none"/>
</svg>
<div class="a" style="left:722px;top:372px;width:293px;height:267px;overflow:hidden">
<div class="a" style="left:146px;top:14px;width:46px;height:46px;border:1.5px solid #0c1c34;background:#2a76b2"></div>
<div class="t" style="left:146px;top:16.8px;width:46px;text-align:center;font-size:12px;letter-spacing:0.3px;color:#e8f4ff">Allied</div>
<div class="t" style="left:146px;top:31px;width:46px;text-align:center;font-size:13px;font-weight:bold;color:#0a0a0a">2</div>
<div class="t" style="left:146px;top:46.5px;width:46px;text-align:center;font-size:12px;color:#d8f040">1*</div>
<div class="a" style="left:180px;top:185px;width:46px;height:46px;border:1.5px solid #0c1c34;background:#2a76b2"></div>
<div class="t" style="left:180px;top:187.8px;width:46px;text-align:center;font-size:12px;letter-spacing:0.3px;color:#e8f4ff">Axis</div>
<div class="t" style="left:180px;top:202px;width:46px;text-align:center;font-size:13px;font-weight:bold;color:#0a0a0a">1</div>
<div class="t" style="left:180px;top:217.5px;width:46px;text-align:center;font-size:12px;color:#d8f040">2*</div>
<div class="a" style="left:78px;top:242px;width:46px;height:46px;border:1.5px solid #0c1c34;background:#2a76b2"></div>
<div class="t" style="left:78px;top:244.8px;width:46px;text-align:center;font-size:12px;letter-spacing:0.3px;color:#e8f4ff">Axis</div>
<div class="t" style="left:78px;top:259px;width:46px;text-align:center;font-size:13px;font-weight:bold;color:#0a0a0a">2</div>
<div class="t" style="left:78px;top:274.5px;width:46px;text-align:center;font-size:12px;color:#d8f040"></div>
<div class="a" style="left:146px;top:242px;width:46px;height:46px;border:1.5px solid #0c1c34;background:#2a76b2"></div>
<div class="t" style="left:146px;top:244.8px;width:46px;text-align:center;font-size:12px;letter-spacing:0.3px;color:#e8f4ff">Axis</div>
<div class="t" style="left:146px;top:259px;width:46px;text-align:center;font-size:13px;font-weight:bold;color:#0a0a0a">3</div>
<div class="t" style="left:146px;top:274.5px;width:46px;text-align:center;font-size:12px;color:#d8f040"></div>
<div class="a" style="left:214px;top:242px;width:46px;height:46px;border:1.5px solid #0c1c34;background:#2a76b2"></div>
<div class="t" style="left:214px;top:244.8px;width:46px;text-align:center;font-size:12px;letter-spacing:0.3px;color:#e8f4ff">Axis</div>
<div class="t" style="left:214px;top:259px;width:46px;text-align:center;font-size:13px;font-weight:bold;color:#0a0a0a">4</div>
<div class="t" style="left:214px;top:274.5px;width:46px;text-align:center;font-size:12px;color:#d8f040"></div>
<div class="a" style="left:180px;top:-43.5px;width:46px;height:46px;border:1.5px solid #0c1c34;background:#2a76b2"></div>
<div class="t" style="left:180px;top:-40.7px;width:46px;text-align:center;font-size:12px;letter-spacing:0.3px;color:#e8f4ff">Axis</div>
<div class="t" style="left:180px;top:-26.5px;width:46px;text-align:center;font-size:13px;font-weight:bold;color:#0a0a0a">1</div>
<div class="t" style="left:180px;top:-11.0px;width:46px;text-align:center;font-size:12px;color:#d8f040">1*</div>
<div class="a" style="left:248px;top:-43.5px;width:46px;height:46px;border:1.5px solid #0c1c34;background:#2a76b2"></div>
<div class="t" style="left:248px;top:-40.7px;width:46px;text-align:center;font-size:12px;letter-spacing:0.3px;color:#e8f4ff">Axis</div>
<div class="t" style="left:248px;top:-26.5px;width:46px;text-align:center;font-size:13px;font-weight:bold;color:#0a0a0a">1</div>
<div class="t" style="left:248px;top:-11.0px;width:46px;text-align:center;font-size:12px;color:#d8f040">1*</div>
<div class="t" style="left:10.5px;top:48.5px;font-size:14px;font-weight:bold;letter-spacing:0.5px;transform:scaleX(1.08);transform-origin:0 0;-webkit-text-stroke:0.25px #000;color:#0a0a0a">Norrk&ouml;ping</div>
<div class="t" style="left:153px;top:94.5px;font-size:12px;font-weight:bold;letter-spacing:0.24px;transform:scaleX(1.08);transform-origin:0 0;-webkit-text-stroke:0.2px #000;color:#0a0a0a">Gotland (Swe)</div>
<div class="t" style="left:50px;top:155px;font-size:12px;font-weight:bold;letter-spacing:0.29px;transform:scaleX(1.08);transform-origin:0 0;-webkit-text-stroke:0.2px #000;color:#0a0a0a">&Ouml;land (Swe)</div>
<div class="t" style="left:249px;top:184px;font-size:14px;font-weight:bold;letter-spacing:0.5px;transform:scaleX(1.08);transform-origin:0 0;-webkit-text-stroke:0.25px #000;color:#0a0a0a">Liepaja</div>
<div class="a" style="left:10.5px;top:31px;width:14px;height:14px;border-radius:50%;background:#fbfbff;border:1px solid #1c1c1c"></div>
<svg class="a" style="left:11.5px;top:32px" width="12" height="12" viewBox="0 0 12 12"><g stroke="#4040b0" stroke-width="1" fill="none"><rect x="5" y="1.5" width="2" height="2"/><path d="M6 3.5 V10.3 M2 7.5 Q3 10.3 6 10.3 Q9 10.3 10 7.5"/></g></svg>
<div class="a" style="left:265.29999999999995px;top:201.70000000000005px;width:14px;height:14px;border-radius:50%;background:#fbfbff;border:1px solid #1c1c1c"></div>
<svg class="a" style="left:266.29999999999995px;top:202.70000000000005px" width="12" height="12" viewBox="0 0 12 12"><g stroke="#4040b0" stroke-width="1" fill="none"><rect x="5" y="1.5" width="2" height="2"/><path d="M6 3.5 V10.3 M2 7.5 Q3 10.3 6 10.3 Q9 10.3 10 7.5"/></g></svg>
<div class="a" style="left:6px;top:261px;width:14px;height:14px;border-radius:50%;background:#fbfbff;border:1px solid #1c1c1c"></div>
<svg class="a" style="left:7px;top:262px" width="12" height="12" viewBox="0 0 12 12"><g stroke="#4040b0" stroke-width="1" fill="none"><rect x="5" y="1.5" width="2" height="2"/><path d="M6 3.5 V10.3 M2 7.5 Q3 10.3 6 10.3 Q9 10.3 10 7.5"/></g></svg>
<div class="a" style="left:215px;top:15px;width:59px;height:59px;transform:scale(0.805,0.78085);transform-origin:0 0"><div class="a" style="left:0;top:0;width:59px;height:59px;background:#c27c0e;border-radius:3px;box-shadow:0 0 0 1.8px #fff8d8, 1.5px 1.5px 0 1.8px #101010;"></div><div class="a" style="left:22px;top:1px;width:15px;height:15px;border-radius:50%;background:#f07c5c"></div><div class="a" style="left:22px;top:41.5px;width:15px;height:15px;border-radius:50%;background:#f4f400"></div><div class="t" style="left:3.2px;top:1.3px;font-size:15px;color:#1a1008">3</div><div class="t" style="left:25.5px;top:1.0px;font-size:15px;color:#1a1008">4</div><div class="t" style="left:49px;top:1.3px;font-size:15px;color:#1a1008">6</div><div class="t" style="left:3.2px;top:40.5px;font-size:15px;color:#1a1008">0</div><div class="t" style="left:25.5px;top:40.5px;font-size:15px;color:#1a1008">2</div><div class="t" style="left:49px;top:40.5px;font-size:15px;color:#1a1008">0</div><div class="a" style="left:8px;top:22.2px;width:44px;height:1.5px;background:#1a1410"></div><div class="a" style="left:12px;top:21.5px;width:36px;height:1px;background:#3a3028"></div><div class="a" style="left:29px;top:18.2px;width:4px;height:4px;background:#2a2218;border-radius:1px 1px 0 0"></div><div class="a" style="left:30.5px;top:16.2px;width:1px;height:3px;background:#2a2218"></div><div class="t" style="left:5.5px;top:28.0px;font-size:10px;font-weight:bold;color:#201408;transform:scaleX(0.95);transform-origin:0 0">Submarine</div></div>
<div class="a" style="left:283px;top:15px;width:59px;height:59px;transform:scale(0.805,0.78085);transform-origin:0 0"><div class="a" style="left:0;top:0;width:59px;height:59px;background:#c27c0e;border-radius:3px;box-shadow:0 0 0 1.8px #fff8d8, 1.5px 1.5px 0 1.8px #101010;"></div><div class="a" style="left:22px;top:1px;width:15px;height:15px;border-radius:50%;background:#f07c5c"></div><div class="a" style="left:22px;top:41.5px;width:15px;height:15px;border-radius:50%;background:#f4f400"></div><div class="t" style="left:3.2px;top:1.3px;font-size:15px;color:#1a1008">2</div><div class="t" style="left:25.5px;top:1.0px;font-size:15px;color:#1a1008">5</div><div class="t" style="left:49px;top:1.3px;font-size:15px;color:#1a1008">6</div><div class="t" style="left:3.2px;top:40.5px;font-size:15px;color:#1a1008">0</div><div class="t" style="left:25.5px;top:40.5px;font-size:15px;color:#1a1008">3</div><div class="t" style="left:49px;top:40.5px;font-size:15px;color:#1a1008">0</div><div class="a" style="left:8px;top:22.2px;width:44px;height:1.5px;background:#1a1410"></div><div class="a" style="left:12px;top:21.5px;width:36px;height:1px;background:#3a3028"></div><div class="a" style="left:29px;top:18.2px;width:4px;height:4px;background:#2a2218;border-radius:1px 1px 0 0"></div><div class="a" style="left:30.5px;top:16.2px;width:1px;height:3px;background:#2a2218"></div><div class="t" style="left:5.5px;top:28.0px;font-size:10px;font-weight:bold;color:#201408;transform:scaleX(0.95);transform-origin:0 0">Submarine</div></div>
<div class="a" style="left:113px;top:186px;width:59px;height:59px;transform:scale(0.805,0.79);transform-origin:0 0"><div class="a" style="left:0;top:0;width:59px;height:59px;background:#a8a8a8;border-radius:3px;box-shadow:0 0 0 1.8px #fafaf4, 1.5px 1.5px 0 1.8px #101010;"></div><div class="a" style="left:3px;top:2px;width:13px;height:14px;background:#fff"></div><div class="a" style="left:22px;top:1px;width:15px;height:15px;border-radius:50%;background:#f07c4c"></div><div class="a" style="left:22px;top:43.5px;width:15px;height:15px;border-radius:50%;background:#f4f400"></div><div class="t" style="left:5px;top:1.3px;font-size:15px;color:#1a1a28">3</div><div class="t" style="left:25.5px;top:1.0px;font-size:15px;color:#1a1a28">3</div><div class="t" style="left:42px;top:1.3px;font-size:15px;color:#1a1a28">10</div><div class="t" style="left:3px;top:42.5px;font-size:15px;color:#1a1a28">0</div><div class="t" style="left:25.5px;top:42.5px;font-size:15px;color:#1a1a28">3</div><div class="t" style="left:49px;top:42.5px;font-size:15px;color:#1a1a28">0</div><svg class="a" style="left:0;top:0" width="59" height="59" viewBox="0 0 59 59">
<g fill="none" stroke-width="1">
<path d="M4 22.8 H42 Q43 22.8 43 21.5" stroke="#2a3438" stroke-width="1.6"/>
<path d="M7 20.5 h30 M9 17 v5 M13 18 v4 M16 16 v6 M19 18.5 h5 M21 17 v5 M25 15.5 v6.5 M28 18 h4 M31 17 v5 M36 19 v3" stroke="#3c484c"/>
<path d="M10 25 L14 22 M17 25 h6 M24 23 v3" stroke="#3c484c"/>
<path d="M8 27.8 H52" stroke="#52707a" stroke-width="1.5"/>
<path d="M40 26.5 h8" stroke="#52707a"/>
<path d="M4 38.3 H54" stroke="#3a484c" stroke-width="1.8"/>
<path d="M8 36.5 L15 33 M13 36.5 h9 M20 32 v5 M24 33 v4 M27 32 v5 M29 35 h5 M33 32 v5 M40 33 v4 M44 36.5 h9 M48 32 v5" stroke="#4c5c60"/>
</g></svg></div>
</div>
<div class="a" style="left:938px;top:378.5px;width:6.5px;height:6.5px;background:#000"><div class="a" style="left:1px;top:1px;width:4.5px;height:4.5px;border-radius:50%;background:#8c8c8c"></div></div>
<div class="a" style="left:945.5px;top:378.5px;width:6.5px;height:6.5px;background:#000"><div class="a" style="left:1px;top:1px;width:4.5px;height:4.5px;border-radius:50%;background:#e8a020"></div></div>
<div class="a" style="left:928.6px;top:386.6px;width:6.5px;height:6.5px;background:#000"><div class="a" style="left:1px;top:1px;width:4.5px;height:4.5px;border-radius:50%;background:#e06010"></div></div>
<div class="a" style="left:928.6px;top:404.5px;width:6.5px;height:6.5px;background:#000"><div class="a" style="left:1px;top:1px;width:4.5px;height:4.5px;border-radius:50%;background:#1a78c0"></div></div>
<div class="a" style="left:1006.6px;top:378.5px;width:6.5px;height:6.5px;background:#000"><div class="a" style="left:1px;top:1px;width:4.5px;height:4.5px;border-radius:50%;background:#8c8c8c"></div></div>
<div class="a" style="left:997.2px;top:386.6px;width:6.5px;height:6.5px;background:#000"><div class="a" style="left:1px;top:1px;width:4.5px;height:4.5px;border-radius:50%;background:#e06010"></div></div>
<div class="a" style="left:833px;top:556px;width:6px;height:2px;background:#000;transform:rotate(-40deg)"></div>
<div class="a" style="left:835.6px;top:550.2px;width:6.5px;height:6.5px;background:#000"><div class="a" style="left:1px;top:1px;width:4.5px;height:4.5px;border-radius:50%;background:#d878c8"></div></div>
<div class="a" style="left:826.5px;top:558px;width:6.5px;height:6.5px;background:#000"><div class="a" style="left:1px;top:1px;width:4.5px;height:4.5px;border-radius:50%;background:#e06010"></div></div>
<div class="a" style="left:1015px;top:372px;width:18px;height:267px;background:linear-gradient(90deg,#000 0,#000 1px,#e8e0d0 1px,#e0d8c8 4px,#3c3428 4px,#3c3428 5px,#8c8070 5px,#6c6050 12px,#3c3428 12px,#3c3428 13px,#e0d8c8 13px,#d8d0c0 16px,#000 16px)"></div>
<div class="a" style="left:1015px;top:372px;width:18px;height:17px;background:linear-gradient(90deg,#d8d4c8,#908878 50%,#5c5444);border:1px solid #000"></div>
<div class="a" style="left:1019px;top:376px;width:0;height:0;border-left:4.5px solid transparent;border-right:4.5px solid transparent;border-bottom:8px solid #ece4d0"></div>
<div class="a" style="left:1015px;top:622px;width:18px;height:17px;background:linear-gradient(90deg,#d8d4c8,#908878 50%,#5c5444);border:1px solid #000"></div>
<div class="a" style="left:1019px;top:627px;width:0;height:0;border-left:4.5px solid transparent;border-right:4.5px solid transparent;border-top:8px solid #ece4d0"></div>
<div class="a" style="left:1017px;top:434px;width:13px;height:15px;background:linear-gradient(135deg,#f0f0ec,#c8c4bc);border:1px solid #000"></div>
<div class="a" style="left:722px;top:639px;width:293px;height:17px;background:linear-gradient(#000 0,#000 1px,#e8e0d0 1px,#e0d8c8 3px,#3c3428 3px,#3c3428 4px,#5c5040 4px,#8c8070 8px,#6c6050 12px,#3c3428 12px,#3c3428 13px,#e0d8c8 13px,#d8d0c0 15px,#000 15px)"></div>
<div class="a" style="left:722px;top:639px;width:17px;height:17px;background:linear-gradient(#d8d4c8,#908878 50%,#5c5444);border:1px solid #000"></div>
<div class="a" style="left:726px;top:643px;width:0;height:0;border-top:4.5px solid transparent;border-bottom:4.5px solid transparent;border-right:8px solid #ece4d0"></div>
<div class="a" style="left:998px;top:639px;width:17px;height:17px;background:linear-gradient(#d8d4c8,#908878 50%,#5c5444);border:1px solid #000"></div>
<div class="a" style="left:1003px;top:643px;width:0;height:0;border-top:4.5px solid transparent;border-bottom:4.5px solid transparent;border-left:8px solid #ece4d0"></div>
<div class="a" style="left:860px;top:641px;width:15px;height:13px;background:linear-gradient(135deg,#f0f0ec,#c8c4bc);border:1px solid #000"></div>
<div class="a" style="left:1015px;top:639px;width:18px;height:17px;background:#d4d0c6;border-right:1px solid #000;border-bottom:1px solid #000"></div>
<div class="a" style="left:730px;top:665px;width:13px;height:13px;background:#fff;border-top:1px solid #808080;border-left:1px solid #808080;border-right:1px solid #e8e8e8;border-bottom:1px solid #e8e8e8"></div>
<div class="a" style="left:748px;top:663px;width:284px;height:17px;border:1px dotted #504838"></div>
<div class="t" style="left:749px;top:665px;font-size:14px;letter-spacing:0.4px;color:#111">Center linked map on selected combat hex</div>
<div class="wb" style="left:721px;top:686px;width:100px;height:30px"><span>Naval CRT</span></div>
<div class="wb" style="left:933px;top:686px;width:100px;height:30px"><span>WIF FE Charts</span></div>
<div class="wb" style="left:827px;top:720px;width:100px;height:30px"><span>Anti-aircraft CRT</span></div>
<div class="wb" style="left:90px;top:720px;width:100px;height:30px"><span>Undo All</span></div>
<div class="wb" style="left:240px;top:720px;width:100px;height:30px"><span>Undo Last</span></div>
<div class="wb" style="left:490px;top:720px;width:100px;height:30px"></div>
<svg class="a" style="left:521px;top:727px" width="17" height="15" viewBox="0 0 17 15"><path d="M1.5 8.5 L5.5 13 L15.5 2" stroke="#1848b0" stroke-width="4" fill="none" stroke-linecap="round" stroke-linejoin="round"/><path d="M1.5 7.8 L5.5 12.2 L15 1.5" stroke="#18b030" stroke-width="2.6" fill="none" stroke-linecap="round" stroke-linejoin="round"/></svg>
<div class="t" style="left:542.5px;top:729px;font-size:12px;transform:scaleX(0.85);transform-origin:0 0">OK</div>
<div class="wb" style="left:933px;top:720px;width:100px;height:30px"></div>
<svg class="a" style="left:961px;top:726px" width="18" height="17" viewBox="0 0 18 17"><path d="M2 10 L9 2 L17 6 L10 15 Z" fill="#7a1a9a" stroke="#301040" stroke-width="0.8"/><path d="M2 10 L10 15 L10 16.5 L2 12 Z" fill="#f0f0f8" stroke="#301040" stroke-width="0.6"/><path d="M10 15 L17 6 L17 8 L10 16.5Z" fill="#501070"/><text x="7" y="10" font-size="7" font-weight="bold" fill="#f0d020" font-family="Liberation Sans">?</text></svg>
<div class="t" style="left:982px;top:729.5px;font-size:12px;transform:scaleX(0.88);transform-origin:0 0">Help</div>
<div class="a" style="left:982px;top:740.5px;width:9px;height:1px;background:#000"></div>
</body></html>
